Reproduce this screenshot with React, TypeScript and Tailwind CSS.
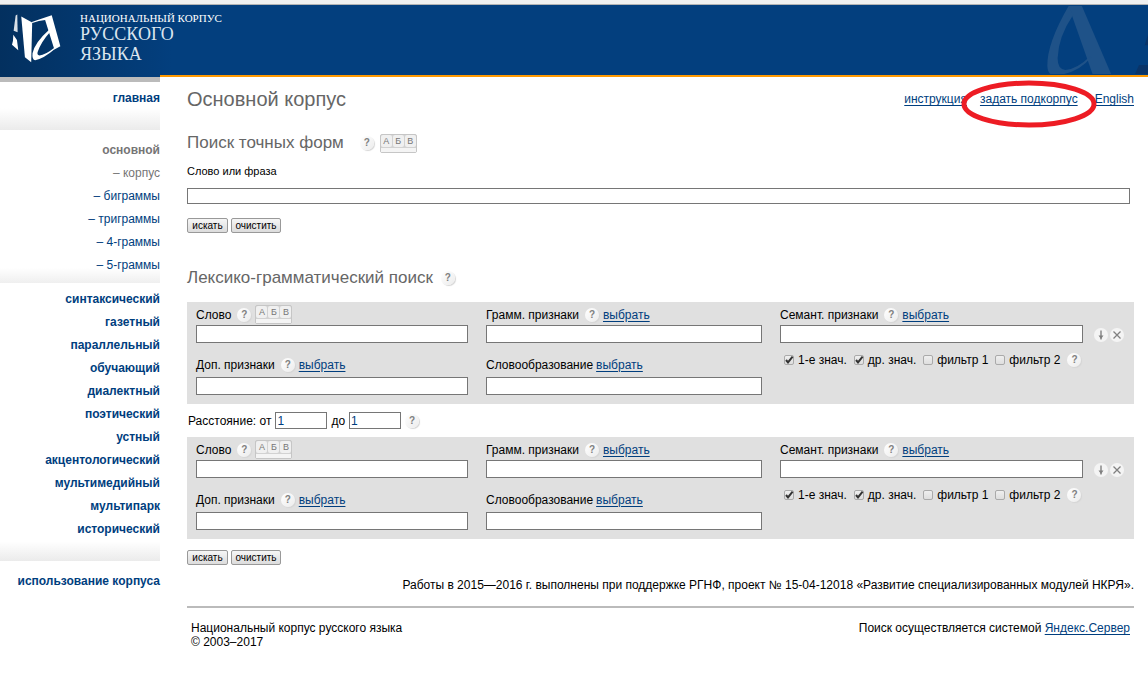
import { useId } from 'react';
import type { ReactNode } from 'react';

const GRAMS = ['биграммы', 'триграммы', '4-граммы', '5-граммы'];

const CORPORA = [
  'синтаксический',
  'газетный',
  'параллельный',
  'обучающий',
  'диалектный',
  'поэтический',
  'устный',
  'акцентологический',
  'мультимедийный',
  'мультипарк',
  'исторический',
];

function Logo() {
  return (
    <svg viewBox="30 36 160 156" className="h-[52px] w-[53px]" fill="white" aria-hidden="true">
      <path d="M47 46 L52 43 L53 97 L41 92 Z" opacity="0.85" />
      <path d="M40 104 L51 120 L55 151 L36 134 L39 122 Z" />
      <path d="M64 49 L97 67 L94 187 L75 172 Z" />
      <path d="M96 66 Q122 56 156 45 L182 139 L164 149 L136 60 Q118 62 97 69 Z" />
      <path d="M149 88 Q104 128 98 160 Q96 180 106 181 Q130 178 167 146 L165 143 Q136 166 119 167 Q110 166 114 155 Q124 126 151 96 Z" />
    </svg>
  );
}

function HeaderArt() {
  return (
    <svg viewBox="590 15 304 210" className="h-[70px] w-[101px]" aria-hidden="true">
      <path d="M655 18 H695 L783 222 H727 Z" fill="#1f5288" />
      <path
        d="M655 18 Q590 130 591 198 Q592 216 600 222 H642 Q690 212 723 172 L721 168 Q680 208 645 210 Q622 208 622 175 Q624 110 669 44 Z"
        fill="#1f5288"
      />
      <path d="M884 136 L894 104 V136 Z M855 222 L867 195 H894 V222 Z" fill="#0a3468" />
    </svg>
  );
}

function HelpButton() {
  return (
    <button
      type="button"
      aria-label="Справка"
      className="flex size-[14px] shrink-0 items-center justify-center rounded-full bg-linear-to-br from-white to-[#ececec] text-[10px] leading-[14px] font-bold text-[#808080] shadow-[1px_1px_1px_#d4d4d4]">
      ?
    </button>
  );
}

function KeyboardButton() {
  return (
    <button
      type="button"
      aria-label="Клавиатура"
      className="flex h-[19px] w-[37px] shrink-0 flex-col rounded-xs border border-[#c6c6c6] bg-[#d2d2d2]">
      <span className="flex w-full gap-px text-[9px] leading-[12px] text-[#777]">
        <span className="flex-1 rounded-xs bg-[#f0f0f0]">А</span>
        <span className="flex-1 rounded-xs bg-[#f0f0f0]">Б</span>
        <span className="flex-1 rounded-xs bg-[#f0f0f0]">В</span>
      </span>
      <span className="mt-px w-full flex-1 bg-[#f4f4f4]" />
    </button>
  );
}

function TextLink({ children }: { children: ReactNode }) {
  return (
    <a href="#" className="text-[#003e7e] underline underline-offset-2">
      {children}
    </a>
  );
}

function FormButtons() {
  return (
    <div className="flex gap-[3px] text-[10px] leading-[13px] text-black">
      <button
        type="submit"
        className="h-[15px] w-[41px] rounded-xs border border-[#999] bg-linear-to-b from-[#f6f6f6] to-[#dcdcdc]">
        искать
      </button>
      <button
        type="reset"
        className="h-[15px] w-[50px] rounded-xs border border-[#999] bg-linear-to-b from-[#f6f6f6] to-[#dcdcdc]">
        очистить
      </button>
    </div>
  );
}

interface FieldProps {
  label: string;
  help?: boolean;
  keyboard?: boolean;
  select?: boolean;
}

function Field({ label, help, keyboard, select }: FieldProps) {
  const id = useId();
  return (
    <div>
      <div className="flex h-[21px] items-center group-last/row:pb-1">
        <label htmlFor={id}>{label}</label>
        <span className={help ? 'ml-[6px] flex items-center gap-1' : 'ml-[3px]'}>
          {help && <HelpButton />}
          {keyboard && <KeyboardButton />}
          {select && <TextLink>выбрать</TextLink>}
        </span>
      </div>
      <input id={id} type="text" className="block h-[18px] w-full border border-[#767676] bg-white px-px" />
    </div>
  );
}

function Check({ label, checked }: { label: string; checked?: boolean }) {
  return (
    <label className="flex items-center gap-1">
      <span className="grid size-[10px]">
        <input
          type="checkbox"
          defaultChecked={checked}
          className="peer col-start-1 row-start-1 size-[10px] appearance-none rounded-xs border border-[#aaa] bg-linear-to-b from-[#efefef] to-[#dedede]"
        />
        <svg
          viewBox="0 0 10 10"
          className="pointer-events-none invisible col-start-1 row-start-1 size-[10px] peer-checked:visible"
          fill="none"
          stroke="#333"
          strokeWidth="2">
          <path d="M2 5 L4 7.4 L8.6 1.6" />
        </svg>
      </span>
      {label}
    </label>
  );
}

function WordBlock() {
  return (
    <fieldset className="grid grid-cols-[272fr_276fr_303fr_33px] gap-x-[18px] bg-[#e0e0e0] pt-[2px] pb-[9px] pl-[9px]">
      <div className="flex flex-col gap-[13px]">
        <Field label="Слово" help keyboard />
        <div className="group/row">
          <Field label="Доп. признаки" help select />
        </div>
      </div>
      <div className="flex flex-col gap-[13px]">
        <Field label="Грамм. признаки" help select />
        <div className="group/row">
          <Field label="Словообразование" select />
        </div>
      </div>
      <div>
        <Field label="Семант. признаки" help select />
        <div className="mt-[10px] ml-1 flex items-center gap-[7px] whitespace-nowrap">
          <Check label="1-е знач." checked />
          <Check label="др. знач." checked />
          <Check label="фильтр 1" />
          <Check label="фильтр 2" />
          <HelpButton />
        </div>
      </div>
      <div className="-ml-[7px] flex gap-[2px] pt-[24px]">
        <button type="button" aria-label="Добавить" className="size-[14px] rounded-full bg-[#f4f4f4]">
          <svg viewBox="0 0 14 14" className="size-[14px]" stroke="#808080" fill="none">
            <path d="M7 2.5 V11.5" strokeWidth="1.4" />
            <path d="M4.5 7.5 H9.5 L7 11 Z" fill="#808080" stroke="none" />
          </svg>
        </button>
        <button type="button" aria-label="Удалить" className="size-[14px] rounded-full bg-[#f4f4f4]">
          <svg viewBox="0 0 14 14" className="size-[14px]" stroke="#808080" strokeWidth="1.3">
            <path d="M3.5 3.5 L10.5 10.5 M10.5 3.5 L3.5 10.5" />
          </svg>
        </button>
      </div>
    </fieldset>
  );
}

function Sidebar() {
  return (
    <nav className="w-40 shrink-0 border-t-[5px] border-[#bbb] text-right leading-[23px] font-bold text-[#003e7e]">
      <div className="h-12 bg-linear-to-b from-white from-55% to-[#ebebeb] pt-[5px]">
        <a href="#">главная</a>
      </div>
      <div className="bg-linear-to-b from-white from-90% to-[#efefef] pt-[9px] pb-[6px]">
        <a href="#" className="block text-[#757575]">
          основной
        </a>
        <ul className="font-normal">
          <li className="text-[#757575]">– корпус</li>
          {GRAMS.map((gram) => (
            <li key={gram}>
              <a href="#">– {gram}</a>
            </li>
          ))}
        </ul>
      </div>
      <ul className="bg-linear-to-b from-white from-93% to-[#ebebeb] pt-[5px] pb-5">
        {CORPORA.map((corpus) => (
          <li key={corpus}>
            <a href="#">{corpus}</a>
          </li>
        ))}
      </ul>
      <a href="#" className="mt-[9px] block whitespace-nowrap">
        использование корпуса
      </a>
    </nav>
  );
}

export default function App() {
  return (
    <div className="min-h-screen bg-white font-['Liberation_Sans',Arial,sans-serif] text-[12px] leading-[14px] text-black">
      <header className="bg-[#f0f0f0] pt-1">
        <div className="border-t border-[#b3b3b3] bg-[#033f7e]">
          <div className="flex h-[72px] items-start justify-between bg-linear-to-r from-[#03305f] to-[#033f7e] to-15%">
            <a href="#" className="flex items-start pt-[7px] pl-[10px] text-white">
              <Logo />
              <span className="ml-[17px] block font-['Liberation_Serif',serif] text-[#dbe5ef]">
                <span className="block text-[11px] leading-[12px] text-white">НАЦИОНАЛЬНЫЙ КОРПУС</span>
                <span className="block text-[18px] leading-[20px]">РУССКОГО</span>
                <span className="block text-[18px] leading-[20px]">ЯЗЫКА</span>
              </span>
            </a>
            <HeaderArt />
          </div>
        </div>
      </header>

      <div className="flex">
        <Sidebar />
        <div className="-mt-[2px] min-w-0 flex-1 border-t-2 border-[#ff9900] pr-[14px] pl-[27px]">
          <div className="flex items-center justify-between pt-[10px]">
            <h1 className="text-[20px] leading-6 text-[#666]">Основной корпус</h1>
            <div className="flex gap-[13px]">
              <TextLink>инструкция</TextLink>
              <span className="relative">
                <TextLink>задать подкорпус</TextLink>
                <svg
                  viewBox="0 0 136 48"
                  className="pointer-events-none absolute -top-[12px] -left-[19px] h-12 w-[136px] max-w-none"
                  fill="none"
                  stroke="#ed1c24"
                  strokeWidth="5">
                  <ellipse cx="68" cy="24" rx="65" ry="21" />
                </svg>
              </span>
              <span className="ml-1">
                <TextLink>English</TextLink>
              </span>
            </div>
          </div>

          <form onSubmit={(e) => e.preventDefault()}>
            <div className="mt-5 flex items-center">
              <h2 className="text-[17px] leading-6 text-[#666]">Поиск точных форм</h2>
              <span className="ml-4 flex items-center gap-[6px]">
                <HelpButton />
                <KeyboardButton />
              </span>
            </div>
            <label htmlFor="phrase" className="mt-2 block text-[11px] leading-4">
              Слово или фраза
            </label>
            <div className="mt-[9px] mb-[14px] pr-1">
              <input id="phrase" type="text" className="block h-4 w-full border border-[#767676] px-px" />
            </div>
            <FormButtons />
          </form>

          <form onSubmit={(e) => e.preventDefault()}>
            <div className="mt-[33px] mb-3 flex items-center">
              <h2 className="text-[17px] leading-6 text-[#666]">Лексико-грамматический поиск</h2>
              <span className="ml-2">
                <HelpButton />
              </span>
            </div>
            <WordBlock />
            <div className="flex h-[33px] items-center gap-1 pl-px">
              <label htmlFor="from">Расстояние: от</label>
              <input
                id="from"
                type="text"
                defaultValue="1"
                className="h-[17px] w-[52px] border border-[#767676] px-px text-[#003e7e]"
              />
              <label htmlFor="to">до</label>
              <input
                id="to"
                type="text"
                defaultValue="1"
                className="h-[17px] w-[52px] border border-[#767676] px-px text-[#003e7e]"
              />
              <HelpButton />
            </div>
            <WordBlock />
            <div className="mt-[11px]">
              <FormButtons />
            </div>
          </form>

          <p className="mt-3 text-right leading-4">
            Работы в 2015—2016 г. выполнены при поддержке РГНФ, проект № 15-04-12018 «Развитие
            специализированных модулей НКРЯ».
          </p>
          <footer className="mt-[13px] flex justify-between border-t-2 border-[#bbb] px-1 pt-[13px]">
            <p>
              Национальный корпус русского языка
              <br />© 2003–2017
            </p>
            <p>
              Поиск осуществляется системой <TextLink>Яндекс.Сервер</TextLink>
            </p>
          </footer>
        </div>
      </div>
    </div>
  );
}
